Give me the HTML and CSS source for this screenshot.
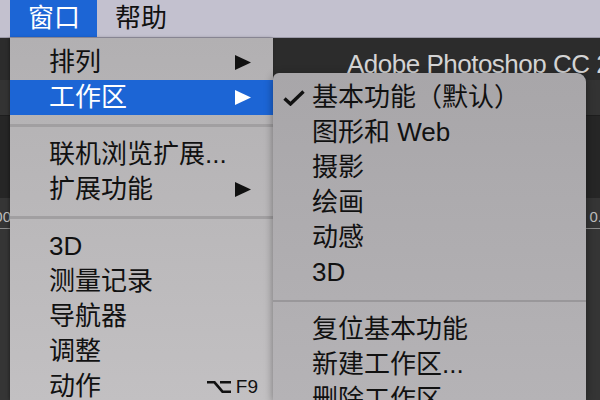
FILE: index.html
```html
<!DOCTYPE html>
<html lang="zh-CN">
<head>
    <meta charset="UTF-8">
    <meta name="viewport" content="width=device-width, initial-scale=1.0">
    <title>窗口 - 工作区</title>
    <link rel="stylesheet" href="styles.css">
</head>
<body>
    <!-- Системная строка меню -->
    <header class="menubar">
        <span class="menubar-item is-open">窗口</span>
        <span class="menubar-item">帮助</span>
    </header>

    <!-- Окно приложения за меню -->
    <div class="ps-window">
        <div class="ps-titlebar">Adobe Photoshop CC 2019</div>
        <div class="ps-options"></div>
        <div class="ps-tabs"></div>
        <div class="ps-ruler">
            <span class="ruler-num ruler-left">200</span>
            <span class="ruler-num ruler-right">0.</span>
        </div>
        <div class="ps-canvas"></div>
    </div>

    <!-- Меню "窗口" -->
    <div class="menu">
        <div class="menu-item">
            <span class="label">排列</span>
            <svg class="arrow" width="16" height="15" viewBox="0 0 16 15"><polygon points="0,0 16,7.5 0,15"/></svg>
        </div>
        <div class="menu-item is-active">
            <span class="label">工作区</span>
            <svg class="arrow" width="16" height="15" viewBox="0 0 16 15"><polygon points="0,0 16,7.5 0,15"/></svg>
        </div>
        <div class="menu-sep"></div>
        <div class="menu-item"><span class="label">联机浏览扩展...</span></div>
        <div class="menu-item">
            <span class="label">扩展功能</span>
            <svg class="arrow" width="16" height="15" viewBox="0 0 16 15"><polygon points="0,0 16,7.5 0,15"/></svg>
        </div>
        <div class="menu-sep"></div>
        <div class="menu-item"><span class="label">3D</span></div>
        <div class="menu-item"><span class="label">测量记录</span></div>
        <div class="menu-item"><span class="label">导航器</span></div>
        <div class="menu-item"><span class="label">调整</span></div>
        <div class="menu-item">
            <span class="label">动作</span>
            <span class="shortcut">
                <svg class="opt-key" width="24" height="12" viewBox="0 0 24 12"><path d="M0 1.3H7.5L15.5 10.7H24M13 1.3H24"/></svg>F9
            </span>
        </div>
    </div>

    <!-- Подменю "工作区" -->
    <div class="submenu">
        <div class="menu-item">
            <svg class="check" width="22" height="16" viewBox="0 0 22 16"><path d="M1.5 8.5L7.5 14L20.5 1.5"/></svg>
            <span class="label">基本功能（默认）</span>
        </div>
        <div class="menu-item"><span class="label">图形和 Web</span></div>
        <div class="menu-item"><span class="label">摄影</span></div>
        <div class="menu-item"><span class="label">绘画</span></div>
        <div class="menu-item"><span class="label">动感</span></div>
        <div class="menu-item"><span class="label">3D</span></div>
        <div class="menu-sep"></div>
        <div class="menu-item"><span class="label">复位基本功能</span></div>
        <div class="menu-item"><span class="label">新建工作区...</span></div>
        <div class="menu-item"><span class="label">删除工作区...</span></div>
    </div>
</body>
</html>
```

FILE: styles.css
```css
:root {
    --menubar-bg: #c3c1cf;
    --menubar-border: #9c9aa9;
    --select-blue: #1c65d5;
    --menu-text: #111;
    --menu-sep: #a19fa1;
    --sub-sep: #99979a;
    --ps-dark: #2b2b2b;
    --row-height: 35px;
}

body {
    margin: 0;
    width: 600px;
    height: 400px;
    overflow: hidden;
    position: relative;
    background: var(--ps-dark);
    font-family: "Liberation Sans", "Noto Sans CJK SC", sans-serif;
    color: var(--menu-text);
}

/* Строка меню */
.menubar {
    display: flex;
    height: 37px;
    padding-left: 10px;
    background: var(--menubar-bg);
    border-bottom: 1px solid var(--menubar-border);
}

.menubar-item {
    padding: 0 17px 0 18px;
    font-size: 26px;
    line-height: 37px;
}

.menubar-item.is-open {
    background: var(--select-blue);
    color: #fff;
}

/* Окно Photoshop на фоне */
.ps-titlebar {
    height: 42px;
    padding-left: 347px;
    background: #2c2c2c;
    color: #d4d4d4;
    font-size: 26px;
    letter-spacing: -0.5px;
    line-height: 52px;
    white-space: nowrap;
    overflow: hidden;
}

.ps-options {
    height: 35px;
    background: #333;
}

.ps-tabs {
    height: 82px;
    background: #262626;
    border-top: 1px solid #1e1e1e;
}

.ps-ruler {
    display: flex;
    justify-content: space-between;
    height: 30px;
    background: #353535;
    border-bottom: 1px solid #8a8a8a;
}

.ruler-num {
    padding-top: 10px;
    font-size: 15px;
    color: #bdbdbd;
}

.ruler-left {
    margin-left: -14px;
}

.ruler-right {
    margin-right: -2px;
}

.ps-canvas {
    height: 171px;
    background: #353535;
}

/* Выпадающее меню */
.menu {
    position: absolute;
    top: 38px;
    left: 10px;
    width: 263px;
    height: 362px;
    padding-top: 7px;
    box-sizing: border-box;
    overflow: hidden;
    background: linear-gradient(#b2b0b2, #c2c0c2);
    box-shadow: -1px 0 3px rgba(0, 0, 0, 0.35);
}

.menu-item {
    display: flex;
    align-items: center;
    height: var(--row-height);
    padding: 0 15px 0 39px;
    font-size: 26px;
    line-height: var(--row-height);
    white-space: nowrap;
}

.menu-item .label {
    flex: 1;
}

.menu-item.is-active {
    background: var(--select-blue);
    color: #fff;
}

.arrow {
    margin-right: 7px;
    fill: currentColor;
}

.menu-sep {
    height: 3px;
    margin: 9px 0 10px;
    background: var(--menu-sep);
}

.shortcut {
    display: flex;
    align-items: center;
    gap: 5px;
    font-size: 19px;
}

.opt-key {
    fill: none;
    stroke: currentColor;
    stroke-width: 2.6;
}

/* Подменю рабочих сред */
.submenu {
    position: absolute;
    top: 73px;
    left: 273px;
    width: 313px;
    height: 327px;
    padding-top: 7px;
    box-sizing: border-box;
    overflow: hidden;
    background: linear-gradient(#a8a6a9, #b5b3b6);
    border-radius: 6px 9px 0 0;
    box-shadow: 0 2px 8px rgba(0, 0, 0, 0.4);
}

.submenu .menu-sep {
    height: 2px;
    margin: 10px 0;
    background: var(--sub-sep);
}

.check {
    position: absolute;
    left: 10px;
    fill: none;
    stroke: var(--menu-text);
    stroke-width: 3.4;
}
```
